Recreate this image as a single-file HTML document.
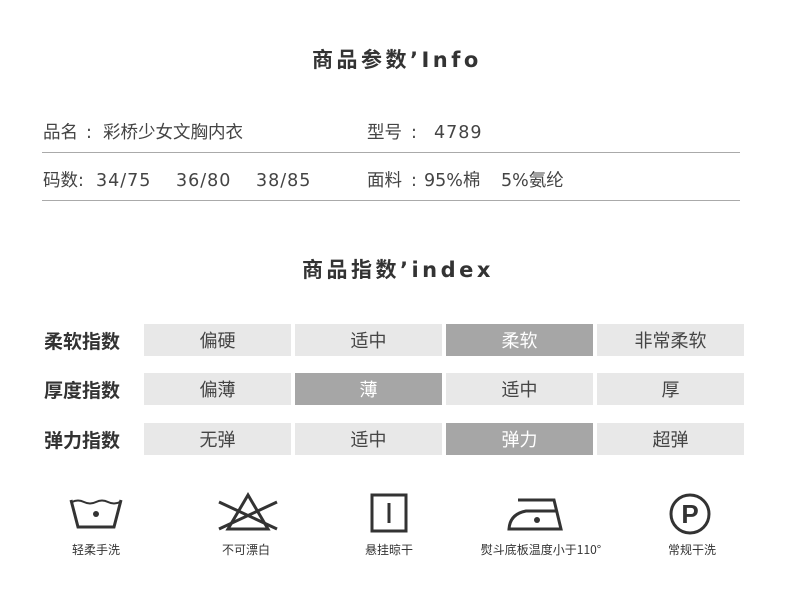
<!DOCTYPE html>
<html><head><meta charset="utf-8"><style>
*{margin:0;padding:0;box-sizing:border-box}
body{width:790px;height:600px;background:#fff;position:relative;font-family:"DejaVu Sans","Noto Sans CJK SC",sans-serif;color:#444;overflow:hidden}
.a{position:absolute;white-space:nowrap}
.t{font-weight:bold;font-size:21px;color:#333;letter-spacing:3.5px}
.r{font-size:17.5px;color:#444;line-height:24px;height:24px}
.line{position:absolute;left:42px;width:698px;height:1px;background:#aaa}
.lbl{font-weight:bold;font-size:19px;color:#333;left:44px;font-family:"Noto Sans CJK SC",sans-serif}
.c{position:absolute;width:147px;height:32px;background:#e8e8e8;font-size:18px;text-align:center;line-height:33px;color:#444;font-family:"Noto Sans CJK SC",sans-serif}
.c.h{background:#a6a6a6;color:#fff}
.cap{position:absolute;font-size:12px;color:#333;text-align:center;width:160px;top:541px;font-family:"Noto Sans CJK SC",sans-serif}
svg{position:absolute}
</style></head><body>
<div class="a t" style="left:312px;top:44px">商品参数’Info</div>
<div class="a r" style="left:43px;top:121px">品名</div>
<div class="a r" style="left:86px;top:121px">:</div>
<div class="a r" style="left:103px;top:121px">彩桥少女文胸内衣</div>
<div class="a r" style="left:367px;top:121px">型号</div>
<div class="a r" style="left:411px;top:121px">:</div>
<div class="a r" style="left:434px;top:121px;letter-spacing:1px">4789</div>
<div class="line" style="top:152px"></div>
<div class="a r" style="left:43px;top:169px">码数:</div>
<div class="a r" style="left:96px;top:169px;letter-spacing:1px">34/75</div>
<div class="a r" style="left:176px;top:169px;letter-spacing:1px">36/80</div>
<div class="a r" style="left:256px;top:169px;letter-spacing:1px">38/85</div>
<div class="a r" style="left:367px;top:169px">面料</div>
<div class="a r" style="left:411px;top:169px">:</div>
<div class="a r" style="left:424px;top:169px">95%棉</div>
<div class="a r" style="left:501px;top:169px">5%氨纶</div>
<div class="line" style="top:200px"></div>
<div class="a t" style="left:302px;top:254px">商品指数’index</div>

<div class="a lbl" style="top:327px">柔软指数</div>
<div class="c" style="left:144px;top:324px">偏硬</div>
<div class="c" style="left:295px;top:324px">适中</div>
<div class="c h" style="left:446px;top:324px">柔软</div>
<div class="c" style="left:597px;top:324px">非常柔软</div>

<div class="a lbl" style="top:376px">厚度指数</div>
<div class="c" style="left:144px;top:373px">偏薄</div>
<div class="c h" style="left:295px;top:373px">薄</div>
<div class="c" style="left:446px;top:373px">适中</div>
<div class="c" style="left:597px;top:373px">厚</div>

<div class="a lbl" style="top:426px">弹力指数</div>
<div class="c" style="left:144px;top:423px">无弹</div>
<div class="c" style="left:295px;top:423px">适中</div>
<div class="c h" style="left:446px;top:423px">弹力</div>
<div class="c" style="left:597px;top:423px">超弹</div>

<svg style="left:68px;top:496px" width="56" height="36" viewBox="0 0 56 36"><g fill="none" stroke="#333" stroke-width="3"><path d="M3 4 L10 31 H46 L53 4"/><path d="M4 6 q6 -3 12 0 q6 3 12 0 q6 -3 12 0 q6 3 12 0" stroke-width="2"/></g><circle cx="28" cy="18" r="3" fill="#333"/></svg>
<svg style="left:216px;top:492px" width="64" height="40" viewBox="0 0 64 40"><g fill="none" stroke="#333" stroke-width="3"><path d="M32 3 L12 37 H52 Z"/><path d="M3 10 L61 37 M61 10 L3 37"/></g></svg>
<svg style="left:370px;top:493px" width="38" height="40" viewBox="0 0 38 40"><g fill="none" stroke="#333" stroke-width="3"><rect x="2" y="2" width="34" height="36"/><path d="M19 10 V30"/></g></svg>
<svg style="left:506px;top:496px" width="58" height="36" viewBox="0 0 58 36"><g fill="none" stroke="#333" stroke-width="3"><path d="M12 4 H48 L55 33 H3 Q4 18 20 15 H50"/></g><circle cx="31" cy="24" r="3" fill="#333"/></svg>
<svg style="left:668px;top:492px" width="44" height="44" viewBox="0 0 44 44"><circle cx="22" cy="22" r="19" fill="none" stroke="#333" stroke-width="3"/><text x="22" y="31" font-family="Liberation Sans" font-weight="bold" font-size="26" text-anchor="middle" fill="#333">P</text></svg>

<div class="cap" style="left:16px">轻柔手洗</div>
<div class="cap" style="left:166px">不可漂白</div>
<div class="cap" style="left:309px">悬挂晾干</div>
<div class="cap" style="left:461px">熨斗底板温度小于110°</div>
<div class="cap" style="left:612px">常规干洗</div>
</body></html>
